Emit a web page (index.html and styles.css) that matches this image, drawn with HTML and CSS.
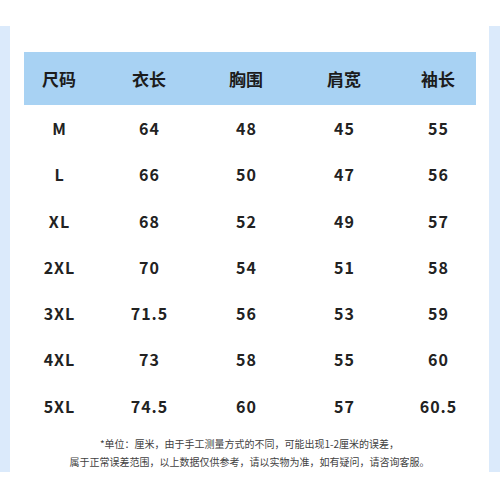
FILE: index.html
```html
<!DOCTYPE html>
<html lang="zh">
<head>
<meta charset="utf-8">
<link rel="stylesheet" href="styles.css">
</head>
<body>
<div class="page">
  <div class="strip strip-left"></div>
  <main class="content">
    <div class="table">
      <div class="cell head">尺码</div>
      <div class="cell head">衣长</div>
      <div class="cell head">胸围</div>
      <div class="cell head">肩宽</div>
      <div class="cell head">袖长</div>

      <div class="cell">M</div><div class="cell">64</div><div class="cell">48</div><div class="cell">45</div><div class="cell">55</div>
      <div class="cell">L</div><div class="cell">66</div><div class="cell">50</div><div class="cell">47</div><div class="cell">56</div>
      <div class="cell">XL</div><div class="cell">68</div><div class="cell">52</div><div class="cell">49</div><div class="cell">57</div>
      <div class="cell">2XL</div><div class="cell">70</div><div class="cell">54</div><div class="cell">51</div><div class="cell">58</div>
      <div class="cell">3XL</div><div class="cell">71.5</div><div class="cell">56</div><div class="cell">53</div><div class="cell">59</div>
      <div class="cell">4XL</div><div class="cell">73</div><div class="cell">58</div><div class="cell">55</div><div class="cell">60</div>
      <div class="cell">5XL</div><div class="cell">74.5</div><div class="cell">60</div><div class="cell">57</div><div class="cell">60.5</div>
    </div>
    <div class="note">
      <p>*单位：厘米，由于手工测量方式的不同，可能出现1-2厘米的误差，</p>
      <p>属于正常误差范围，以上数据仅供参考，请以实物为准，如有疑问，请咨询客服。</p>
    </div>
  </main>
  <div class="strip strip-right"></div>
</div>
</body>
</html>
```

FILE: styles.css
```css
html, body {
  margin: 0;
  padding: 0;
  background: #ffffff;
}
body {
  width: 500px;
  height: 500px;
  overflow: hidden;
  font-family: "Noto Sans CJK SC", "Noto Sans", sans-serif;
  color: #222222;
}
.page {
  display: flex;
  width: 500px;
  height: 500px;
}
.strip {
  background: #dbeafb;
  margin-top: 26px;
  height: 446px;
}
.strip-left {
  width: 10px;
}
.strip-right {
  width: 11px;
}
.content {
  flex: 1;
  display: flex;
  flex-direction: column;
  padding-top: 52px;
}
.table {
  margin-left: 14px;
  width: 452px;
  display: grid;
  grid-template-columns: 70px 110px 84px 112px 76px;
  grid-template-rows: 53px;
  grid-auto-rows: 46.25px;
}
.cell {
  display: flex;
  align-items: center;
  justify-content: center;
  font-size: 16px;
  font-weight: 700;
  line-height: 1;
  letter-spacing: 1px;
  text-indent: 1px;
  color: #222222;
}
.head {
  background: #a8d2f3;
  font-size: 17px;
  letter-spacing: 0;
  text-indent: 0;
  color: #1c1c1c;
}
.note {
  margin-top: 6px;
  text-align: center;
  font-size: 10px;
  line-height: 18px;
  color: #3f3f3f;
}
.note p {
  margin: 0;
}
```
